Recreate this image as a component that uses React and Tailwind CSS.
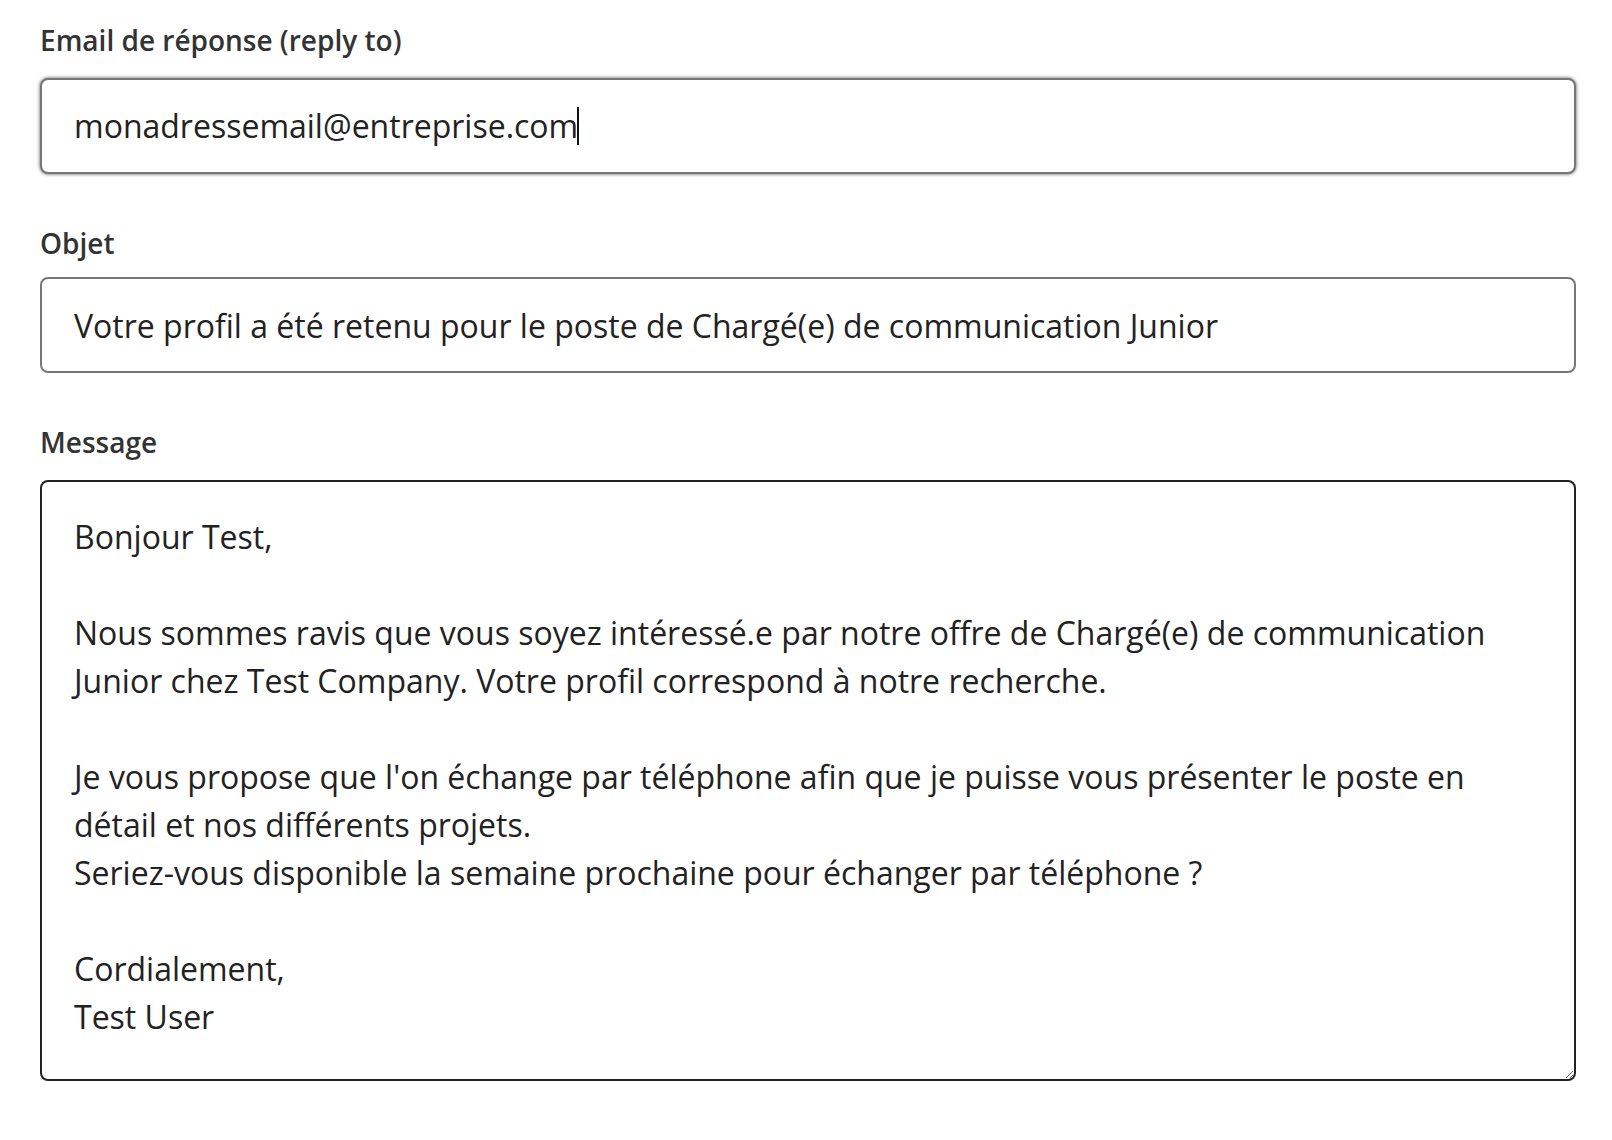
import React from 'react';

const message =
  "Bonjour Test,\n\nNous sommes ravis que vous soyez intéressé.e par notre offre de Chargé(e) de communication\nJunior chez Test Company. Votre profil correspond à notre recherche.\n\nJe vous propose que l'on échange par téléphone afin que je puisse vous présenter le poste en\ndétail et nos différents projets.\nSeriez-vous disponible la semaine prochaine pour échanger par téléphone ?\n\nCordialement,\nTest User";

const Label = ({ children, htmlFor, className = '' }) => (
  <label htmlFor={htmlFor} className={`block text-[28px] leading-[42px] font-semibold text-[#333333] ${className}`}>
    {children}
  </label>
);

export default function App() {
  return (
    <div className="min-h-screen bg-white pl-10 pr-9 pt-[19px] font-['Open_Sans',sans-serif]">
      <div>
        <Label htmlFor="replyTo" className="mb-[17px]">Email de réponse (reply to)</Label>
        {/* champ actif : on dessine le curseur à la main */}
        <div
          id="replyTo"
          className="flex items-center h-[96px] w-full px-8 bg-white text-[32px] text-[#222222] border-2 border-[#767676] rounded-lg shadow-[0_0_3px_1px_rgba(0,0,0,0.4)]"
        >
          <span>monadressemail@entreprise.com</span>
          <span className="inline-block w-[2px] h-[38px] bg-[#111111] -ml-px" />
        </div>
      </div>

      <div className="mt-[48px]">
        <Label htmlFor="subject" className="mb-[13px]">Objet</Label>
        <input
          id="subject"
          type="text"
          readOnly
          value="Votre profil a été retenu pour le poste de Chargé(e) de communication Junior"
          className="block h-[96px] w-full px-8 bg-white text-[32px] text-[#222222] border-2 border-[#777777] rounded-lg outline-none"
        />
      </div>

      <div className="mt-[48px]">
        <Label htmlFor="message" className="mb-[17px]">Message</Label>
        <textarea
          id="message"
          readOnly
          defaultValue={message}
          className="block h-[601px] w-full px-8 pt-[31px] pb-8 bg-white text-[32px] leading-[48px] text-[#222222] border-2 border-[#222222] rounded-lg outline-none"
        />
      </div>
    </div>
  );
}
